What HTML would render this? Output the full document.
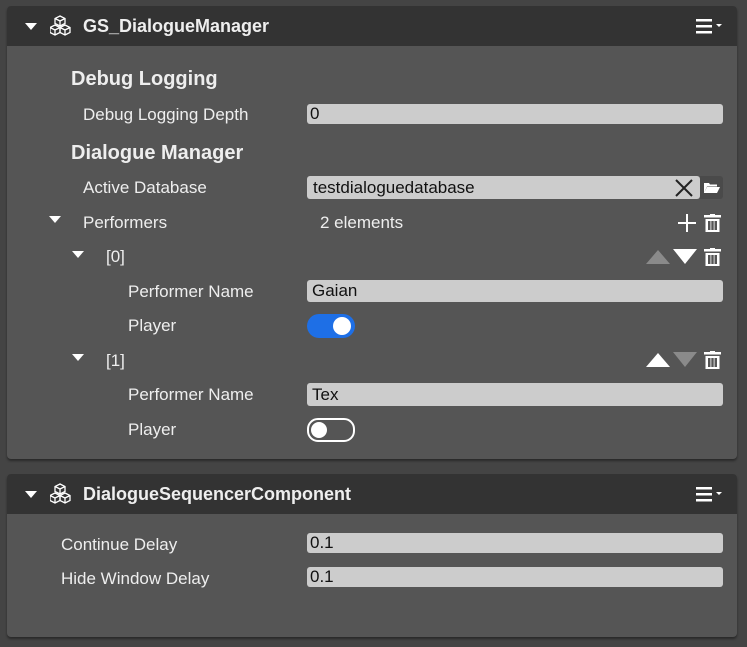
<!DOCTYPE html>
<html><head><meta charset="utf-8"><style>
body{margin:0;width:747px;height:647px;background:#444;font-family:"Liberation Sans",sans-serif;position:relative;overflow:hidden;color:#eee}
.p{position:absolute;left:7px;width:730px;background:#555;border-radius:4px;box-shadow:0 2px 2px #2a2a2a}
.h{position:absolute;left:0;top:0;width:730px;height:40px;background:#333;border-radius:4px 4px 0 0}
.t{position:absolute;font-size:17px;white-space:nowrap;line-height:20px}
.b{font-weight:bold;font-size:19px}
.f{position:absolute;left:307px;width:416px;height:20px;background:#ccc;border-radius:3px;color:#111;font-size:17px;line-height:20px;padding-left:3px;box-sizing:border-box}
.tri{position:absolute;width:0;height:0;border-left:6px solid transparent;border-right:6px solid transparent;border-top:7px solid #fff}
svg{position:absolute}
</style></head><body>
<svg width="0" height="0"><defs>
<g id="cube"><path d="M10 1l5 2.5v5l-5 2.5-5-2.5v-5z M5 3.5l5 2.5 5-2.5 M10 6v5" fill="none" stroke="#fff" stroke-width="1.3"/>
<path d="M5 10l5 2.5v5l-5 2.5-5-2.5v-5z M0 12.5l5 2.5 5-2.5 M5 15v5" fill="none" stroke="#fff" stroke-width="1.3"/>
<path d="M15 10l5 2.5v5l-5 2.5-5-2.5v-5z M10 12.5l5 2.5 5-2.5 M15 15v5" fill="none" stroke="#fff" stroke-width="1.3"/></g>
<g id="menu"><rect x="0" y="0" width="16" height="2.5" fill="#fff"/><rect x="0" y="6" width="16" height="2.5" fill="#fff"/><rect x="0" y="12" width="16" height="2.5" fill="#fff"/><path d="M20 5h6l-3 3z" fill="#fff"/></g>
<g id="trash"><rect x="0" y="1" width="17" height="2.5" fill="#fff"/><rect x="6" y="-1" width="5" height="2" fill="#fff"/><path d="M1.5 5h14v13h-14z M5 7v9 M8.5 7v9 M12 7v9" fill="none"/><path d="M1.5 5h14v13h-14zM4 7v9h2.5v-9zM7.3 7v9h2.4v-9zM10.5 7v9h2.5v-9z" fill="#fff" fill-rule="evenodd"/></g>
</defs></svg>

<div class="p" style="top:6px;height:453px">
 <div class="h"></div>
</div>
<div class="tri" style="left:25px;top:23px"></div>
<svg style="left:50px;top:15px" width="21" height="22"><use href="#cube"/></svg>
<div class="t b" style="left:83px;top:16px;font-size:18px">GS_DialogueManager</div>
<svg style="left:696px;top:19px" width="28" height="16"><use href="#menu"/></svg>

<div class="t b" style="left:71px;top:69px;font-size:20px">Debug Logging</div>
<div class="t" style="left:83px;top:105px">Debug Logging Depth</div>
<div class="f" style="top:104px">0</div>
<div class="t b" style="left:71px;top:143px;font-size:20px">Dialogue Manager</div>
<div class="t" style="left:83px;top:178px">Active Database</div>
<div class="f" style="top:176px;width:393px;height:23px;line-height:23px;padding-left:6px">testdialoguedatabase</div>
<svg style="left:674px;top:178px" width="20" height="20"><path d="M2 2l16 16M18 2L2 18" stroke="#222" stroke-width="2"/></svg>
<div style="position:absolute;left:700px;top:176px;width:23px;height:23px;background:#4a4a4a;border-radius:0 3px 3px 0"></div>
<svg style="left:704px;top:182px" width="16" height="12"><path d="M0 1h5l1 1.5h7v2H3L0 11z M3 5h13l-3 6H0z" fill="#fff"/></svg>

<div class="tri" style="left:49px;top:216px"></div>
<div class="t" style="left:83px;top:213px">Performers</div>
<div class="t" style="left:320px;top:213px">2 elements</div>
<svg style="left:678px;top:214px" width="18" height="18"><path d="M9 0v18M0 9h18" stroke="#fff" stroke-width="2"/></svg>
<svg style="left:704px;top:214px" width="18" height="20"><use href="#trash"/></svg>

<div class="tri" style="left:72px;top:251px"></div>
<div class="t" style="left:106px;top:247px">[0]</div>
<svg style="left:646px;top:249px" width="52" height="16"><path d="M0 15h24L12 1z" fill="#8a8a8a"/><path d="M27 0h24L39 15z" fill="#fff"/></svg>
<svg style="left:704px;top:248px" width="18" height="20"><use href="#trash"/></svg>
<div class="t" style="left:128px;top:282px">Performer Name</div>
<div class="f" style="top:280px;height:22px;line-height:22px;padding-left:5px">Gaian</div>
<div class="t" style="left:128px;top:316px">Player</div>
<div style="position:absolute;left:307px;top:314px;width:48px;height:24px;border-radius:12px;background:#1e6fe6"></div>
<div style="position:absolute;left:333px;top:317px;width:18px;height:18px;border-radius:9px;background:#fff"></div>

<div class="tri" style="left:72px;top:354px"></div>
<div class="t" style="left:106px;top:351px">[1]</div>
<svg style="left:646px;top:352px" width="52" height="16"><path d="M0 15h24L12 1z" fill="#fff"/><path d="M27 0h24L39 15z" fill="#8a8a8a"/></svg>
<svg style="left:704px;top:351px" width="18" height="20"><use href="#trash"/></svg>
<div class="t" style="left:128px;top:385px">Performer Name</div>
<div class="f" style="top:383px;height:23px;line-height:23px;padding-left:5px">Tex</div>
<div class="t" style="left:128px;top:420px">Player</div>
<div style="position:absolute;left:307px;top:418px;width:44px;height:20px;border-radius:11px;border:2px solid #fff"></div>
<div style="position:absolute;left:311px;top:422px;width:16px;height:16px;border-radius:8px;background:#fff"></div>

<div class="p" style="top:474px;height:163px">
 <div class="h"></div>
</div>
<div class="tri" style="left:25px;top:491px"></div>
<svg style="left:50px;top:483px" width="21" height="22"><use href="#cube"/></svg>
<div class="t b" style="left:83px;top:484px;font-size:18px">DialogueSequencerComponent</div>
<svg style="left:696px;top:487px" width="28" height="16"><use href="#menu"/></svg>
<div class="t" style="left:61px;top:535px">Continue Delay</div>
<div class="f" style="top:533px">0.1</div>
<div class="t" style="left:61px;top:569px">Hide Window Delay</div>
<div class="f" style="top:567px">0.1</div>
</body></html>
